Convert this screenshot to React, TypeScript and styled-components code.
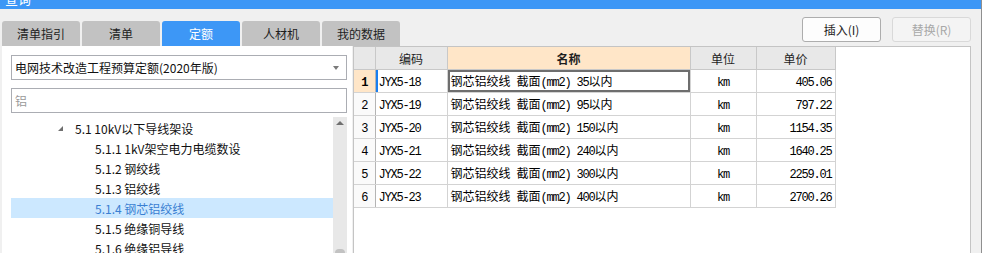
import React, { ReactElement } from 'react'
import styled, { createGlobalStyle } from 'styled-components'

const GlobalStyle = createGlobalStyle`
  html, body {
    margin: 0;
    padding: 0;
    background: #ffffff;
    font-family: "Noto Sans CJK SC", "Liberation Sans", sans-serif;
  }
  #root {
    width: 986px;
    height: 253px;
    overflow: hidden;
  }
`

const Window = styled.div`
  width: 982px;
  height: 253px;
  background: #f0f0f0;
  border-right: 1px solid #8f8f8f;
  box-sizing: border-box;
  display: flex;
  flex-direction: column;
  overflow: hidden;
`

const TitleBar = styled.div`
  height: 9px;
  flex: none;
  background: #3d97f6;
  overflow: hidden;
  padding-left: 5px;
`

const TitleText = styled.span`
  display: block;
  margin-top: -8px;
  color: #fff;
  font-size: 13px;
  line-height: 14px;
`

const TopRow = styled.div`
  flex: none;
  height: 29px;
  margin-top: 8px;
  padding: 0 10px 0 2px;
  display: flex;
`

const Tabs = styled.div`
  align-self: flex-end;
  display: flex;
  gap: 2px;
`

const Tab = styled.div<{ $active?: boolean }>`
  width: 78px;
  height: 25px;
  border-radius: 3px 3px 0 0;
  background: ${p => (p.$active ? '#3d97f6' : '#c2c2c2')};
  color: ${p => (p.$active ? '#ffffff' : '#1e1e1e')};
  font-size: 12px;
  display: flex;
  align-items: center;
  justify-content: center;
`

const Buttons = styled.div`
  margin-left: auto;
  align-self: flex-start;
  display: flex;
  gap: 11px;
`

const Button = styled.div<{ $disabled?: boolean }>`
  width: 79px;
  height: 25px;
  box-sizing: border-box;
  border: 1px solid ${p => (p.$disabled ? '#d9d9d9' : '#adadad')};
  border-radius: 3px;
  background: ${p => (p.$disabled ? '#f4f4f4' : '#fdfdfd')};
  color: ${p => (p.$disabled ? '#a8a8a8' : '#1e1e1e')};
  font-size: 12px;
  display: flex;
  align-items: center;
  justify-content: center;
`

const Body = styled.div`
  flex: 1;
  min-height: 0;
  display: flex;
`

const LeftPanel = styled.div`
  width: 350px;
  margin-left: 2px;
  background: #ffffff;
  box-sizing: border-box;
  padding: 9px 5px 0 9px;
  display: flex;
  flex-direction: column;
  gap: 8px;
`

const Field = styled.div`
  height: 25px;
  flex: none;
  box-sizing: border-box;
  border: 1px solid #abadb3;
  padding: 0 3px;
  display: flex;
  align-items: center;
  font-size: 12px;
  color: #111;
`

const Placeholder = styled.span`
  color: #9a9a9a;
`

const DropArrow = styled.span`
  margin-left: auto;
  margin-right: 4px;
  width: 0;
  height: 0;
  border-left: 3.5px solid transparent;
  border-right: 3.5px solid transparent;
  border-top: 4px solid #7a7a7a;
`

const TreeWrap = styled.div`
  flex: 1;
  min-height: 0;
  margin-top: -4px;
  display: flex;
`

const TreeList = styled.div`
  flex: 1;
  padding-top: 1px;
`

const TreeRow = styled.div<{ $indent: number; $selected?: boolean }>`
  height: 20px;
  display: flex;
  align-items: center;
  padding-left: ${p => p.$indent}px;
  background: ${p => (p.$selected ? '#cce8ff' : 'transparent')};
  color: ${p => (p.$selected ? '#3a7fd2' : '#111')};
  font-size: 12px;
  white-space: nowrap;
`

const Expander = styled.span`
  width: 0;
  height: 0;
  margin-right: 12px;
  border-left: 5px solid transparent;
  border-bottom: 5px solid #6f6f6f;
`

const ScrollBar = styled.div`
  width: 14px;
  background: #e8e8e8;
  display: flex;
  flex-direction: column;
  align-items: center;
  justify-content: space-between;
`

const UpArrow = styled.span`
  margin-top: 4px;
  width: 0;
  height: 0;
  border-left: 4px solid transparent;
  border-right: 4px solid transparent;
  border-bottom: 4px solid #707070;
`

const Thumb = styled.span`
  width: 10px;
  height: 4px;
  border-radius: 5px 5px 0 0;
  background: #c2c2c2;
`

const GridPanel = styled.div`
  flex: 1;
  margin: 0 10px 0 1px;
  background: #ffffff;
  border: 1px solid #c4c4c4;
  border-bottom: none;
`

const Table = styled.table`
  border-collapse: collapse;
  table-layout: fixed;
  width: 481px;
  font-size: 12px;
`

const Head = styled.th<{ $hot?: boolean }>`
  height: 22px;
  padding: 0;
  border: 1px solid #c8c8c8;
  border-top: none;
  background: ${p => (p.$hot ? '#ffe6c8' : '#e8e8e8')};
  font-weight: ${p => (p.$hot ? 700 : 400)};
  color: #1e1e1e;
  text-align: center;
  &:first-child {
    border-left: none;
  }
`

const Cell = styled.td<{ $align?: string; $current?: boolean; $focus?: boolean }>`
  height: 22px;
  padding: 0 3px;
  border: 1px solid #d3d3d3;
  text-align: ${p => p.$align ?? 'left'};
  white-space: nowrap;
  overflow: hidden;
  color: #000;
  box-shadow: ${p =>
    p.$focus ? 'inset 0 0 0 2px #6e6e6e' : p.$current ? 'inset 2px 0 0 #1a7ff0' : 'none'};
`

const RowNo = styled.td<{ $current?: boolean }>`
  height: 22px;
  padding: 0;
  border: 1px solid #d3d3d3;
  border-left: none;
  border-right-color: #b4b4b4;
  text-align: center;
  background: ${p => (p.$current ? '#ffe6c8' : '#fafafa')};
  font-weight: ${p => (p.$current ? 700 : 400)};
`

const Latin = styled.span`
  font-family: "Liberation Mono", monospace;
  letter-spacing: -1.2px;
`

const CJK = styled.span`
  font-family: "Noto Sans CJK SC", sans-serif;
`

function Mixed({ text }: { text: string }): ReactElement {
  const runs = text.match(/[\x00-\x7f]+|[^\x00-\x7f]+/g) ?? []
  return (
    <>
      {runs.map((r, i) => (/^[\x00-\x7f]/.test(r) ? <Latin key={i}>{r}</Latin> : <CJK key={i}>{r}</CJK>))}
    </>
  )
}

const tabs = ['清单指引', '清单', '定额', '人材机', '我的数据']

const tree = [
  { label: '5.1 10kV以下导线架设', indent: 47, open: true },
  { label: '5.1.1 1kV架空电力电缆数设', indent: 84 },
  { label: '5.1.2 钢绞线', indent: 84 },
  { label: '5.1.3 铝绞线', indent: 84 },
  { label: '5.1.4 钢芯铝绞线', indent: 84, selected: true },
  { label: '5.1.5 绝缘铜导线', indent: 84 },
  { label: '5.1.6 绝缘铝导线', indent: 84 },
]

const rows = [
  { code: 'JYX5-18', size: '35', price: '405.06' },
  { code: 'JYX5-19', size: '95', price: '797.22' },
  { code: 'JYX5-20', size: '150', price: '1154.35' },
  { code: 'JYX5-21', size: '240', price: '1640.25' },
  { code: 'JYX5-22', size: '300', price: '2259.01' },
  { code: 'JYX5-23', size: '400', price: '2700.26' },
]

export default function App(): ReactElement {
  return (
    <>
      <GlobalStyle />
      <Window>
        <TitleBar>
          <TitleText>查询</TitleText>
        </TitleBar>
        <TopRow>
          <Tabs>
            {tabs.map(t => (
              <Tab key={t} $active={t === '定额'}>{t}</Tab>
            ))}
          </Tabs>
          <Buttons>
            <Button>插入(I)</Button>
            <Button $disabled>替换(R)</Button>
          </Buttons>
        </TopRow>
        <Body>
          <LeftPanel>
            <Field>
              电网技术改造工程预算定额(2020年版)
              <DropArrow />
            </Field>
            <Field>
              <Placeholder>铝</Placeholder>
            </Field>
            <TreeWrap>
              <TreeList>
                {tree.map(n => (
                  <TreeRow key={n.label} $indent={n.indent} $selected={n.selected}>
                    {n.open && <Expander />}
                    {n.label}
                  </TreeRow>
                ))}
              </TreeList>
              <ScrollBar>
                <UpArrow />
                <Thumb />
              </ScrollBar>
            </TreeWrap>
          </LeftPanel>
          <GridPanel>
            <Table>
              <colgroup>
                <col style={{ width: 21 }} />
                <col style={{ width: 72 }} />
                <col style={{ width: 243 }} />
                <col style={{ width: 66 }} />
                <col style={{ width: 79 }} />
              </colgroup>
              <thead>
                <tr>
                  <Head />
                  <Head>编码</Head>
                  <Head $hot>名称</Head>
                  <Head>单位</Head>
                  <Head>单价</Head>
                </tr>
              </thead>
              <tbody>
                {rows.map((r, i) => (
                  <tr key={r.code}>
                    <RowNo $current={i === 0}>
                      <Latin>{i + 1}</Latin>
                    </RowNo>
                    <Cell $current={i === 0}>
                      <Mixed text={r.code} />
                    </Cell>
                    <Cell $focus={i === 0}>
                      <Mixed text={`钢芯铝绞线 截面(mm2) ${r.size}以内`} />
                    </Cell>
                    <Cell $align="center">
                      <Latin>km</Latin>
                    </Cell>
                    <Cell $align="right">
                      <Latin>{r.price}</Latin>
                    </Cell>
                  </tr>
                ))}
              </tbody>
            </Table>
          </GridPanel>
        </Body>
      </Window>
    </>
  )
}
